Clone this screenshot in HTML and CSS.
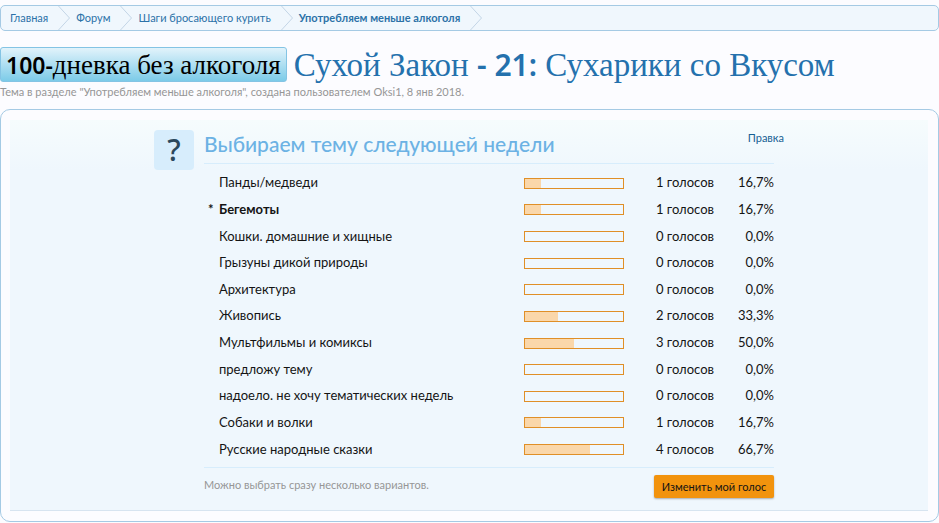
FILE: index.html
```html
<!DOCTYPE html>
<html lang="ru">
<head>
    <meta charset="UTF-8">
    <meta name="viewport" content="width=device-width, initial-scale=1.0">
    <title>Сухой Закон - 21: Сухарики со Вкусом</title>
    <link rel="stylesheet" href="styles.css">
</head>
<body>
    <nav class="breadcrumb">
        <a href="#home">Главная</a>
        <svg class="arrow" viewBox="0 0 12 24"><path d="M0.5 0L11.5 12L0.5 24"/></svg>
        <a href="#forum">Форум</a>
        <svg class="arrow" viewBox="0 0 12 24"><path d="M0.5 0L11.5 12L0.5 24"/></svg>
        <a href="#steps">Шаги бросающего курить</a>
        <svg class="arrow" viewBox="0 0 12 24"><path d="M0.5 0L11.5 12L0.5 24"/></svg>
        <a href="#alcohol" class="current">Употребляем меньше алкоголя</a>
        <svg class="arrow" viewBox="0 0 12 24"><path d="M0.5 0L11.5 12L0.5 24"/></svg>
    </nav>
    <header class="title-bar">
        <h1><span class="prefix"><b>100-</b>дневка без алкоголя</span> <span class="title">Сухой Закон <b>- 21:</b> Сухарики со Вкусом</span></h1>
        <p class="description">Тема в разделе "Употребляем меньше алкоголя", создана пользователем Oksi1, 8 янв 2018.</p>
    </header>
    <main class="panel">
        <section class="poll-block">
            <div class="poll">
                <div class="question-mark">?</div>
                <form class="poll-content">
                    <h2>Выбираем тему следующей недели</h2>
                    <table class="results">
                        <tr><td class="option">Панды/медведи</td><td class="bar-cell"><div class="bar"><div class="fill" style="width: 16.7%"></div></div></td><td class="count">1 голосов</td><td class="percent">16,7%</td></tr>
                        <tr><td class="option voted">Бегемоты</td><td class="bar-cell"><div class="bar"><div class="fill" style="width: 16.7%"></div></div></td><td class="count">1 голосов</td><td class="percent">16,7%</td></tr>
                        <tr><td class="option">Кошки. домашние и хищные</td><td class="bar-cell"><div class="bar"></div></td><td class="count">0 голосов</td><td class="percent">0,0%</td></tr>
                        <tr><td class="option">Грызуны дикой природы</td><td class="bar-cell"><div class="bar"></div></td><td class="count">0 голосов</td><td class="percent">0,0%</td></tr>
                        <tr><td class="option">Архитектура</td><td class="bar-cell"><div class="bar"></div></td><td class="count">0 голосов</td><td class="percent">0,0%</td></tr>
                        <tr><td class="option">Живопись</td><td class="bar-cell"><div class="bar"><div class="fill" style="width: 33.3%"></div></div></td><td class="count">2 голосов</td><td class="percent">33,3%</td></tr>
                        <tr><td class="option">Мультфильмы и комиксы</td><td class="bar-cell"><div class="bar"><div class="fill" style="width: 50%"></div></div></td><td class="count">3 голосов</td><td class="percent">50,0%</td></tr>
                        <tr><td class="option">предложу тему</td><td class="bar-cell"><div class="bar"></div></td><td class="count">0 голосов</td><td class="percent">0,0%</td></tr>
                        <tr><td class="option">надоело. не хочу тематических недель</td><td class="bar-cell"><div class="bar"></div></td><td class="count">0 голосов</td><td class="percent">0,0%</td></tr>
                        <tr><td class="option">Собаки и волки</td><td class="bar-cell"><div class="bar"><div class="fill" style="width: 16.7%"></div></div></td><td class="count">1 голосов</td><td class="percent">16,7%</td></tr>
                        <tr><td class="option">Русские народные сказки</td><td class="bar-cell"><div class="bar"><div class="fill" style="width: 66.7%"></div></div></td><td class="count">4 голосов</td><td class="percent">66,7%</td></tr>
                    </table>
                    <div class="poll-footer">
                        <span class="note">Можно выбрать сразу несколько вариантов.</span>
                        <button type="button">Изменить мой голос</button>
                    </div>
                </form>
                <a href="#edit" class="edit">Правка</a>
            </div>
        </section>
    </main>
</body>
</html>
```

FILE: styles.css
```css
* {
    box-sizing: border-box;
}
body {
    margin: 0;
    padding: 5px 0 0;
    background-color: #fcfcff;
    color: #141414;
    font-family: 'Trebuchet MS', Lato, sans-serif;
    font-size: 12px;
    line-height: 16px;
}
a {
    color: #176093;
    text-decoration: none;
}
a:hover {
    text-decoration: underline;
}
.breadcrumb {
    display: flex;
    align-items: center;
    height: 26px;
    padding-left: 9px;
    background-color: #f0f7fd;
    border: 1px solid #a5cae4;
    border-radius: 5px;
    font-size: 11px;
    white-space: nowrap;
}
.breadcrumb a {
    color: #2c72a8;
}
.breadcrumb .current {
    font-weight: bold;
}
.arrow {
    width: 12px;
    height: 24px;
    margin: 0 6px 0 10px;
    flex: none;
}
.arrow path {
    fill: none;
    stroke: #c3d5e6;
}
.title-bar {
    padding-top: 16px;
}
h1 {
    display: flex;
    align-items: center;
    gap: 7px;
    margin: 0;
    font-family: 'Liberation Serif', serif;
    font-weight: normal;
    white-space: nowrap;
}
h1 b {
    font-family: 'Noto Sans', sans-serif;
    font-weight: 600;
}
.prefix {
    height: 35px;
    padding: 0 5px;
    border: 1px solid #84c4e4;
    border-radius: 3px;
    background: linear-gradient(#e2f3fb, #7ccbe8);
    color: #000;
    font-size: 27px;
    line-height: 35px;
}
.prefix b {
    font-size: 23px;
}
.title {
    color: #2471ad;
    font-size: 33px;
    line-height: 33px;
}
.title b {
    font-size: 30px;
}
.description {
    margin: 2px 0 0;
    color: #969696;
    font-size: 11px;
}
.panel {
    margin-top: 9px;
    padding: 10px 10px 10px 9px;
    border: 1px solid #a5cae4;
    border-radius: 10px;
}
.poll-block {
    padding: 10px;
    border-bottom: 1px solid #d7e4f0;
    background: linear-gradient(#f6fcfd, #eff7fd 50px);
}
.poll {
    position: relative;
    display: flex;
    gap: 10px;
    width: 630px;
    margin: 0 auto;
    padding-right: 10px;
}
.question-mark {
    width: 40px;
    height: 40px;
    flex: none;
    border-radius: 4px;
    background-color: #d7edfc;
    color: #2b485c;
    font-family: 'Noto Sans', sans-serif;
    font-size: 30px;
    font-weight: 500;
    line-height: 40px;
    text-align: center;
}
.poll-content {
    flex: 1;
}
h2 {
    margin: 0;
    height: 34px;
    border-bottom: 1px solid #d7edfc;
    color: #6cb2e4;
    font-size: 21px;
    font-weight: 500;
    line-height: 28px;
}
.edit {
    position: absolute;
    top: 0;
    right: 0;
    font-size: 11px;
}
.results {
    width: 100%;
    height: 293px;
    margin: 5px 0;
    border-collapse: collapse;
    font-size: 13px;
}
.results td {
    padding: 0;
}
.results .option {
    position: relative;
    padding-left: 15px;
}
.voted {
    font-weight: bold;
}
.voted::before {
    content: '*';
    position: absolute;
    left: 4px;
}
.results .bar-cell {
    width: 100px;
    padding-top: 2px;
}
.bar {
    height: 11px;
    border: 1px solid #e08f27;
}
.fill {
    height: 100%;
    background-color: #fad7aa;
}
.count {
    width: 90px;
    text-align: right;
}
.percent {
    width: 60px;
    text-align: right;
}
.poll-footer {
    display: flex;
    justify-content: space-between;
    align-items: flex-start;
    padding: 7px 0 2px;
    border-top: 1px solid #d7edfc;
}
.note {
    padding-top: 2px;
    color: #969696;
    font-size: 11px;
}
button {
    width: 120px;
    height: 23px;
    padding: 0;
    border: 0;
    border-radius: 2px;
    background-color: #f2930d;
    box-shadow: 0 1px 2px rgba(0, 0, 0, 0.3);
    color: #141414;
    font-family: inherit;
    font-size: 11px;
    white-space: nowrap;
}
```
